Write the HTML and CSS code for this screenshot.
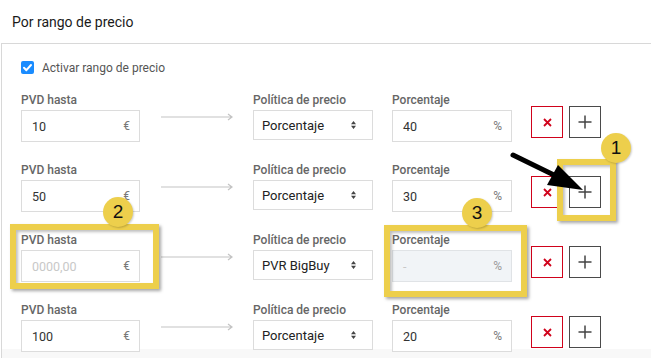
FILE: index.html
```html
<!DOCTYPE html>
<html lang="es">
<head>
<meta charset="utf-8">
<title>Por rango de precio</title>
<link rel="stylesheet" href="styles.css">
</head>
<body>
<div class="page">
  <header class="head">Por rango de precio</header>
  <section class="panel">
    <label class="check">
      <span class="box"><svg width="13" height="13" viewBox="0 0 13 13"><path d="M3 6.8 L5.4 9.2 L10 4" fill="none" stroke="#fff" stroke-width="2" stroke-linecap="round" stroke-linejoin="round"/></svg></span>
      <span>Activar rango de precio</span>
    </label>

    <div class="rows">
      <div class="row">
        <div class="field"><div class="lbl">PVD hasta</div><div class="inp w119"><span class="val">10</span><span class="unit">€</span></div></div>
        <div class="arrow"><svg width="74" height="8" viewBox="0 0 74 8"><path d="M0 4 H71 M67 1 L71 4 L67 7" fill="none" stroke="#c4c4c4" stroke-width="1.2"/></svg></div>
        <div class="field"><div class="lbl">Política de precio</div><div class="sel"><span>Porcentaje</span><svg class="caret" width="5" height="8" viewBox="0 0 5 8"><path d="M2.5 0 L5 3.2 H0 Z M2.5 8 L5 4.8 H0 Z" fill="#444"/></svg></div></div>
        <div class="field pct"><div class="lbl">Porcentaje</div><div class="inp w120"><span class="val">40</span><span class="unit">%</span></div></div>
        <div class="btns"><button class="btn del"><svg width="9" height="9" viewBox="0 0 9 9"><path d="M1 1 L8 8 M8 1 L1 8" stroke="#d0021b" stroke-width="1.8"/></svg></button><button class="btn add"><svg width="14" height="14" viewBox="0 0 14 14"><path d="M7 0.5 V13.5 M0.5 7 H13.5" stroke="#444" stroke-width="1.5"/></svg></button></div>
      </div>

      <div class="row">
        <div class="field"><div class="lbl">PVD hasta</div><div class="inp w119"><span class="val">50</span><span class="unit">€</span></div></div>
        <div class="arrow"><svg width="74" height="8" viewBox="0 0 74 8"><path d="M0 4 H71 M67 1 L71 4 L67 7" fill="none" stroke="#c4c4c4" stroke-width="1.2"/></svg></div>
        <div class="field"><div class="lbl">Política de precio</div><div class="sel"><span>Porcentaje</span><svg class="caret" width="5" height="8" viewBox="0 0 5 8"><path d="M2.5 0 L5 3.2 H0 Z M2.5 8 L5 4.8 H0 Z" fill="#444"/></svg></div></div>
        <div class="field pct"><div class="lbl">Porcentaje</div><div class="inp w120"><span class="val">30</span><span class="unit">%</span></div></div>
        <div class="btns"><button class="btn del"><svg width="9" height="9" viewBox="0 0 9 9"><path d="M1 1 L8 8 M8 1 L1 8" stroke="#d0021b" stroke-width="1.8"/></svg></button><button class="btn add"><svg width="14" height="14" viewBox="0 0 14 14"><path d="M7 0.5 V13.5 M0.5 7 H13.5" stroke="#444" stroke-width="1.5"/></svg></button></div>
      </div>

      <div class="row">
        <div class="field"><div class="lbl">PVD hasta</div><div class="inp w119"><span class="val ph">0000,00</span><span class="unit">€</span></div></div>
        <div class="arrow"><svg width="74" height="8" viewBox="0 0 74 8"><path d="M0 4 H71 M67 1 L71 4 L67 7" fill="none" stroke="#c4c4c4" stroke-width="1.2"/></svg></div>
        <div class="field"><div class="lbl">Política de precio</div><div class="sel"><span>PVR BigBuy</span><svg class="caret" width="5" height="8" viewBox="0 0 5 8"><path d="M2.5 0 L5 3.2 H0 Z M2.5 8 L5 4.8 H0 Z" fill="#444"/></svg></div></div>
        <div class="field pct"><div class="lbl">Porcentaje</div><div class="inp w120 dis"><span class="val ph">-</span><span class="unit">%</span></div></div>
        <div class="btns"><button class="btn del"><svg width="9" height="9" viewBox="0 0 9 9"><path d="M1 1 L8 8 M8 1 L1 8" stroke="#d0021b" stroke-width="1.8"/></svg></button><button class="btn add"><svg width="14" height="14" viewBox="0 0 14 14"><path d="M7 0.5 V13.5 M0.5 7 H13.5" stroke="#444" stroke-width="1.5"/></svg></button></div>
      </div>

      <div class="row">
        <div class="field"><div class="lbl">PVD hasta</div><div class="inp w119"><span class="val">100</span><span class="unit">€</span></div></div>
        <div class="arrow"><svg width="74" height="8" viewBox="0 0 74 8"><path d="M0 4 H71 M67 1 L71 4 L67 7" fill="none" stroke="#c4c4c4" stroke-width="1.2"/></svg></div>
        <div class="field"><div class="lbl">Política de precio</div><div class="sel"><span>Porcentaje</span><svg class="caret" width="5" height="8" viewBox="0 0 5 8"><path d="M2.5 0 L5 3.2 H0 Z M2.5 8 L5 4.8 H0 Z" fill="#444"/></svg></div></div>
        <div class="field pct"><div class="lbl">Porcentaje</div><div class="inp w120"><span class="val">20</span><span class="unit">%</span></div></div>
        <div class="btns"><button class="btn del"><svg width="9" height="9" viewBox="0 0 9 9"><path d="M1 1 L8 8 M8 1 L1 8" stroke="#d0021b" stroke-width="1.8"/></svg></button><button class="btn add"><svg width="14" height="14" viewBox="0 0 14 14"><path d="M7 0.5 V13.5 M0.5 7 H13.5" stroke="#444" stroke-width="1.5"/></svg></button></div>
      </div>
    </div>
  </section>
  <div class="foot"></div>

  <div class="hl hl1"></div>
  <div class="hl hl2"></div>
  <div class="hl hl3"></div>
  <div class="num n1">1</div>
  <div class="num n2">2</div>
  <div class="num n3">3</div>
  <svg class="pointer" width="651" height="358" viewBox="0 0 651 358"><path d="M513 155 L556 176" stroke="#000" stroke-width="5" stroke-linecap="round"/><path d="M583 190 L547 185 L558 165 Z" fill="#000"/></svg>
</div>
</body>
</html>
```

FILE: styles.css
```css
* { box-sizing: border-box; }
html, body { margin: 0; padding: 0; background: #fff; }
body { font-family: Roboto, "Liberation Sans", Arial, sans-serif; color: #333; }
.page { position: relative; width: 651px; height: 358px; overflow: hidden; }

.head {
  height: 43px;
  padding-left: 12px;
  display: flex;
  align-items: center;
  font-size: 14px;
  color: #1a1a1a;
}

.panel {
  margin-left: 1px;
  border-top: 1px solid #d8d8d8;
  border-left: 1px solid #d8d8d8;
  padding: 17px 0 0 19px;
  height: 306px;
}

.check {
  display: flex;
  align-items: center;
  gap: 8px;
  height: 13px;
  font-size: 12px;
  color: #555;
}
.box {
  width: 13px; height: 13px;
  border-radius: 2px;
  background: #1a8cff;
  display: flex;
}

.rows { margin-top: 18px; display: flex; flex-direction: column; gap: 20px; }
.row { display: flex; align-items: flex-start; height: 50px; }

.field { display: flex; flex-direction: column; }
.pct { margin-left: 19px; }
.lbl {
  height: 18px; line-height: 16px;
  font-size: 12px; font-weight: 500; color: #666;
}

.inp {
  height: 32px;
  border: 1px solid #dcdcdc;
  display: flex; align-items: center; justify-content: space-between;
  padding: 0 9px 0 10px;
  font-size: 12.5px; color: #333;
  background: #fff;
}
.w119 { width: 119px; }
.w120 { width: 120px; }
.unit { font-size: 12px; color: #777; }
.ph { color: #c8c8c8; }
.dis { background: #f1f4f7; border-color: #e0e3e6; }
.dis .unit { color: #999; }

.arrow { width: 113px; padding: 21px 0 0 21px; line-height: 0; }

.sel {
  width: 120px; height: 30px;
  border: 1px solid #dcdcdc;
  display: flex; align-items: center; justify-content: space-between;
  padding: 0 16px 0 8px;
  font-size: 13px; color: #222;
}

.btns { display: flex; gap: 6px; margin: 14px 0 0 19px; }
.btn {
  width: 32px; height: 32px;
  padding: 0; background: #fff;
  display: flex; align-items: center; justify-content: center;
}
.del { border: 1px solid #d0021b; }
.add { border: 1px solid #4a4a4a; }

.foot { height: 10px; background: #f8f8f8; margin-left: 1px; border-left: 1px solid #d8d8d8; }

.hl {
  position: absolute;
  border: 6px solid #edcf4c;
  box-shadow: 2px 2px 3px rgba(0,0,0,0.35), inset 2px 2px 3px rgba(0,0,0,0.25);
}
.hl1 { left: 557px; top: 159px; width: 59px; height: 62px; }
.hl2 { left: 10px; top: 224px; width: 149px; height: 65px; }
.hl3 { left: 384px; top: 225px; width: 143px; height: 72px; }

.num {
  position: absolute;
  width: 30px; height: 30px;
  border-radius: 50%;
  background: #edcf4c;
  display: flex; align-items: center; justify-content: center;
  font-family: "Liberation Sans", Arial, sans-serif;
  font-size: 19px; color: #111;
  box-shadow: 1px 1px 2px rgba(0,0,0,0.2);
}
.n1 { left: 601px; top: 133px; }
.n2 { left: 103px; top: 197px; }
.n3 { left: 462px; top: 198px; }

.pointer { position: absolute; left: 0; top: 0; }
```
